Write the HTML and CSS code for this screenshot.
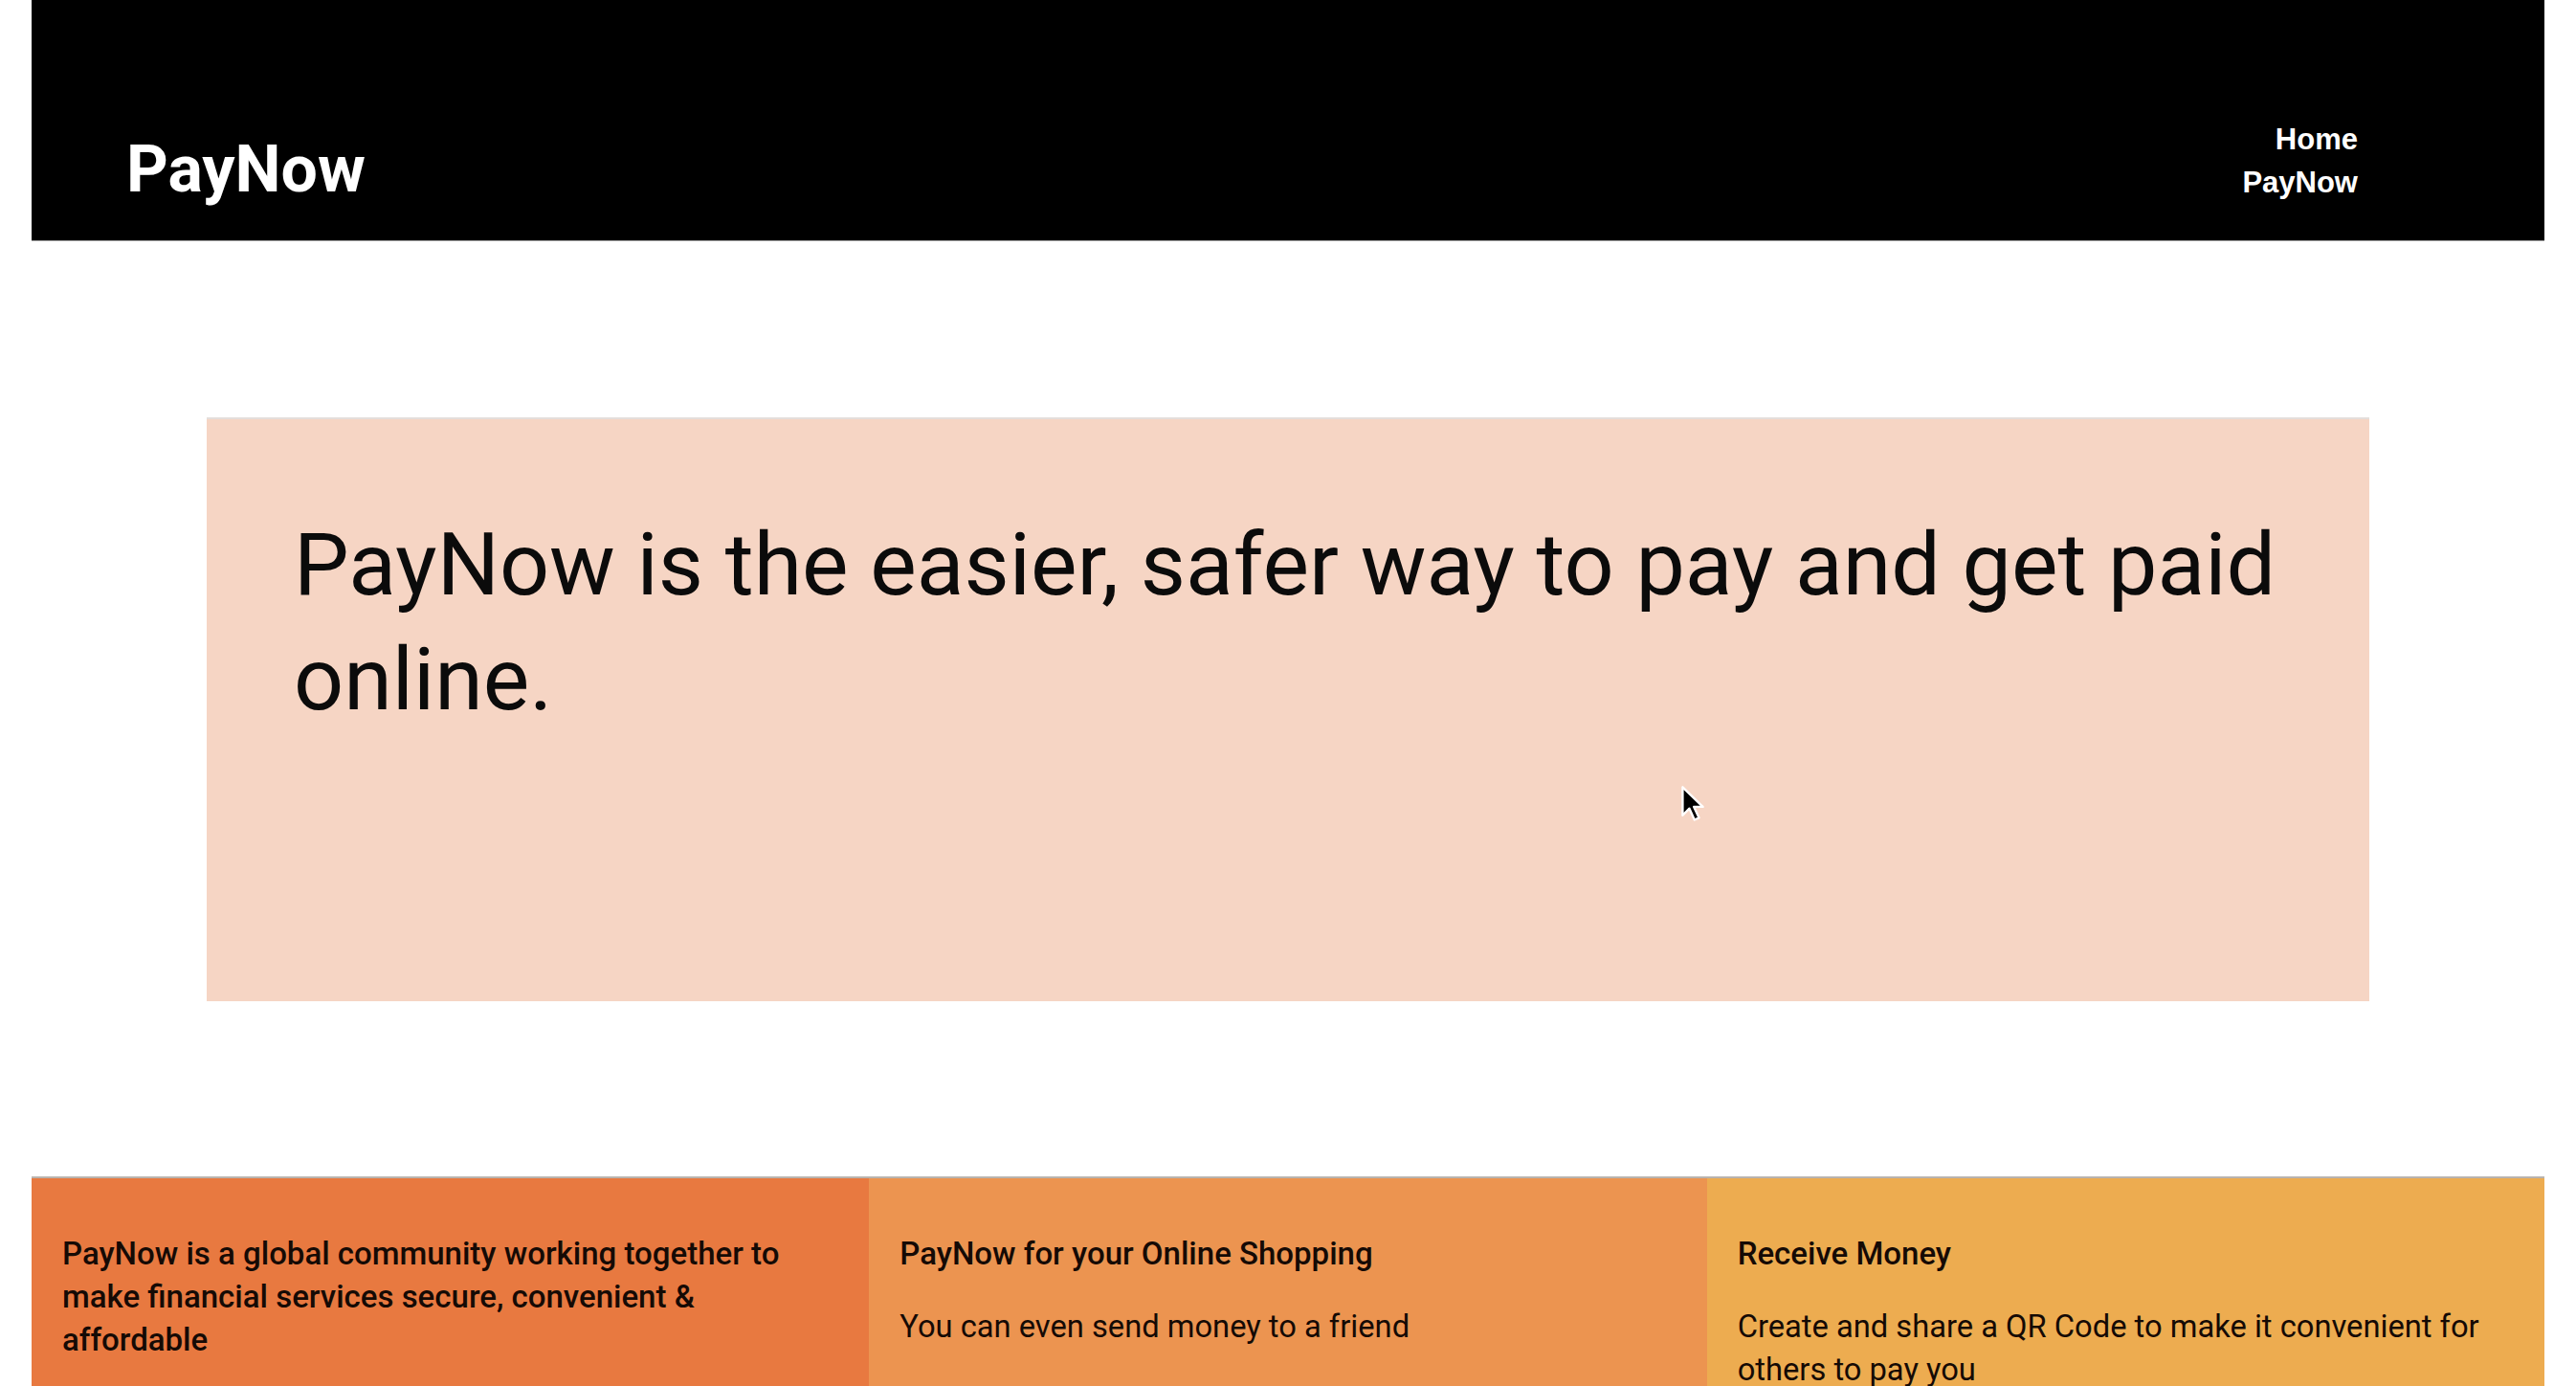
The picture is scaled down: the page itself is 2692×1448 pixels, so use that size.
FILE: index.html
```html
<!DOCTYPE html>
<html lang="en">
<head>
<meta charset="utf-8">
<title>PayNow</title>
<link rel="stylesheet" href="styles.css">
</head>
<body>
<header class="topbar">
  <div class="logo">PayNow</div>
  <nav class="nav">
    <a href="#" class="nav-link">Home</a>
    <a href="#" class="nav-link">PayNow</a>
  </nav>
</header>
<main>
  <section class="hero">
    <h1 class="hero-title">PayNow is the easier, safer way to pay and get paid online.</h1>
  </section>
  <section class="cards">
    <div class="card card-one">
      <h3 class="card-title">PayNow is a global community working together to make financial services secure, convenient &amp; affordable</h3>
    </div>
    <div class="card card-two">
      <h3 class="card-title">PayNow for your Online Shopping</h3>
      <p class="card-text">You can even send money to a friend</p>
    </div>
    <div class="card card-three">
      <h3 class="card-title">Receive Money</h3>
      <p class="card-text">Create and share a QR Code to make it convenient for others to pay you</p>
    </div>
  </section>
</main>
<svg class="cursor" width="26" height="40" viewBox="0 0 22 34" aria-hidden="true">
  <path d="M2 2 L2 27 L8 21 L12.5 31 L16.5 29.2 L12 19.5 L20 19.5 Z" fill="#000" stroke="#fff" stroke-width="2" stroke-linejoin="round"/>
</svg>
</body>
</html>
```
FILE: styles.css
```css
html, body {
  margin: 0;
  padding: 0;
  background: #fff;
}
body {
  padding: 0 33px;
  font-family: Roboto, "Liberation Sans", Arial, sans-serif;
  color: #111;
  position: relative;
  overflow: hidden;
  height: 1448px;
  box-sizing: border-box;
}
.topbar {
  height: 252px;
  background: #000;
  display: flex;
  justify-content: space-between;
  align-items: flex-end;
  padding: 0 195px 38px 99px;
  box-sizing: border-box;
  border-bottom: 1px solid #9a9a9a;
}
.logo {
  color: #fff;
  font-family: Roboto, "Liberation Sans", sans-serif;
  font-weight: 700;
  font-size: 68px;
  line-height: 72px;
}
.nav {
  display: flex;
  flex-direction: column;
  align-items: flex-end;
}
.nav-link {
  color: #fff;
  text-decoration: none;
  font-family: "Liberation Sans", Arial, sans-serif;
  font-weight: 700;
  font-size: 31px;
  line-height: 45px;
}
.hero {
  margin: 184px 183px 183px;
  height: 610px;
  box-sizing: border-box;
  background: #f6d5c4;
  border-top: 2px solid #e4dedb;
  padding: 92px 91px;
}
.hero-title {
  margin: 0;
  font-family: Roboto, "Liberation Sans", sans-serif;
  font-weight: 400;
  font-size: 91.5px;
  line-height: 120px;
  color: #0b0b0b;
}
.cards {
  display: grid;
  grid-template-columns: repeat(3, 1fr);
  border-top: 2px solid #b9b3ae;
}
.card {
  min-height: 320px;
  padding: 56px 32px 0;
  box-sizing: border-box;
}
.card-one { background: #e87940; }
.card-two { background: #ec9450; }
.card-three { background: #edac50; }
.card-title {
  margin: 0;
  font-family: Roboto, "Liberation Sans", sans-serif;
  font-weight: 500;
  font-size: 33px;
  line-height: 45px;
  color: #150a05;
}
.card-text {
  margin: 32px 0 0;
  font-family: Roboto, "Liberation Sans", sans-serif;
  font-weight: 400;
  font-size: 32.7px;
  line-height: 45px;
  color: #150a05;
}
.cursor {
  position: absolute;
  left: 1756px;
  top: 820px;
}
```
